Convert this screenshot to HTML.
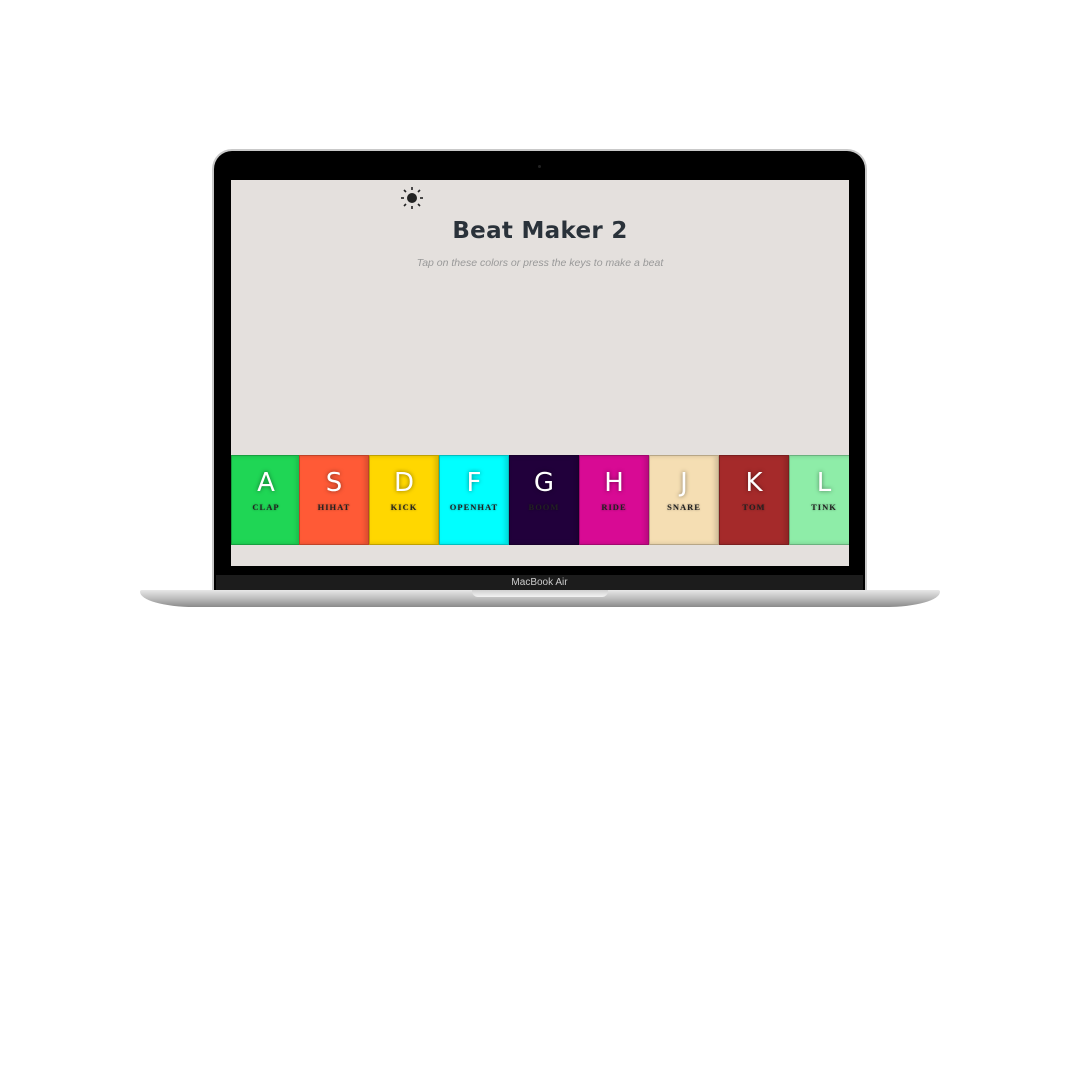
<!DOCTYPE html>
<html><head><style>
body{margin:0;width:1080px;height:1080px;background:#fff;position:relative;overflow:hidden;font-family:"Liberation Sans",sans-serif}
.lid{position:absolute;left:214px;top:151px;width:651px;height:442px;background:#000;border-radius:18px 18px 0 0;box-shadow:0 0 0 2px #c9c9c9}
.chin{position:absolute;left:216px;top:575px;width:647px;height:16px;background:#1c1c1c;color:#ccc;font-size:10px;text-align:center;line-height:16px}
.base{position:absolute;left:140px;top:590px;width:800px;height:17px;background:linear-gradient(#e8e8e8,#bdbdbd 50%,#8a8a8a);border-radius:2px 2px 60px 60px/2px 2px 17px 17px}
.notch{position:absolute;left:472px;top:590px;width:136px;height:7px;background:linear-gradient(#d0d0d0,#f2f2f2);border-radius:0 0 6px 6px}
.screen{position:absolute;left:231px;top:180px;width:618px;height:386px;background:#e4e0dd;overflow:hidden}
h1{position:absolute;left:0;right:0;top:38px;margin:0;text-align:center;font:900 23px "DejaVu Sans",sans-serif;color:#2a323a;letter-spacing:0.3px}
.sub{position:absolute;left:0;right:0;top:77px;text-align:center;font:italic 300 10.5px "Liberation Sans",sans-serif;color:#999}
.key{position:absolute;top:275px;width:68px;height:88px;border:1px solid rgba(0,0,0,.25);text-align:center;box-shadow:inset -3px 0 5px rgba(0,0,0,.15)}
.key b{display:block;margin-top:12px;font:400 26px "DejaVu Sans",sans-serif;color:#fff;text-shadow:0 0 4px rgba(0,0,0,.5)}
.key span{display:block;margin-top:4px;font:bold 8.5px "Liberation Serif",serif;letter-spacing:1px;color:#222;text-shadow:0 0 2px rgba(0,0,0,.4)}
</style></head><body>
<div class="lid"></div>
<div style="position:absolute;left:538px;top:165px;width:3px;height:3px;border-radius:50%;background:#222"></div>
<div class="screen">
<svg style="position:absolute;left:169px;top:6px" width="24" height="24" viewBox="0 0 24 24"><circle cx="12" cy="12" r="5" fill="#222"/><g stroke="#222" stroke-width="1.6"><line x1="12" y1="1" x2="12" y2="4"/><line x1="12" y1="20" x2="12" y2="23"/><line x1="1" y1="12" x2="4" y2="12"/><line x1="20" y1="12" x2="23" y2="12"/><line x1="4" y1="4" x2="6" y2="6"/><line x1="18" y1="18" x2="20" y2="20"/><line x1="4" y1="20" x2="6" y2="18"/><line x1="18" y1="6" x2="20" y2="4"/></g></svg>
<h1>Beat Maker 2</h1>
<div class="sub">Tap on these colors or press the keys to make a beat</div>
<div class="key" style="left:0;background:#1fd655"><b>A</b><span>CLAP</span></div>
<div class="key" style="left:68px;background:#ff5a36"><b>S</b><span>HIHAT</span></div>
<div class="key" style="left:138px;background:#ffd700"><b>D</b><span>KICK</span></div>
<div class="key" style="left:208px;background:#00ffff"><b>F</b><span>OPENHAT</span></div>
<div class="key" style="left:278px;background:#21003b"><b>G</b><span>BOOM</span></div>
<div class="key" style="left:348px;background:#d80a94"><b>H</b><span>RIDE</span></div>
<div class="key" style="left:418px;background:#f5deb3"><b>J</b><span>SNARE</span></div>
<div class="key" style="left:488px;background:#a52a2a"><b>K</b><span>TOM</span></div>
<div class="key" style="left:558px;background:#8eeda8"><b>L</b><span>TINK</span></div>
</div>
<div class="chin">MacBook Air</div>
<div class="base"></div>
<div class="notch"></div>
</body></html>
